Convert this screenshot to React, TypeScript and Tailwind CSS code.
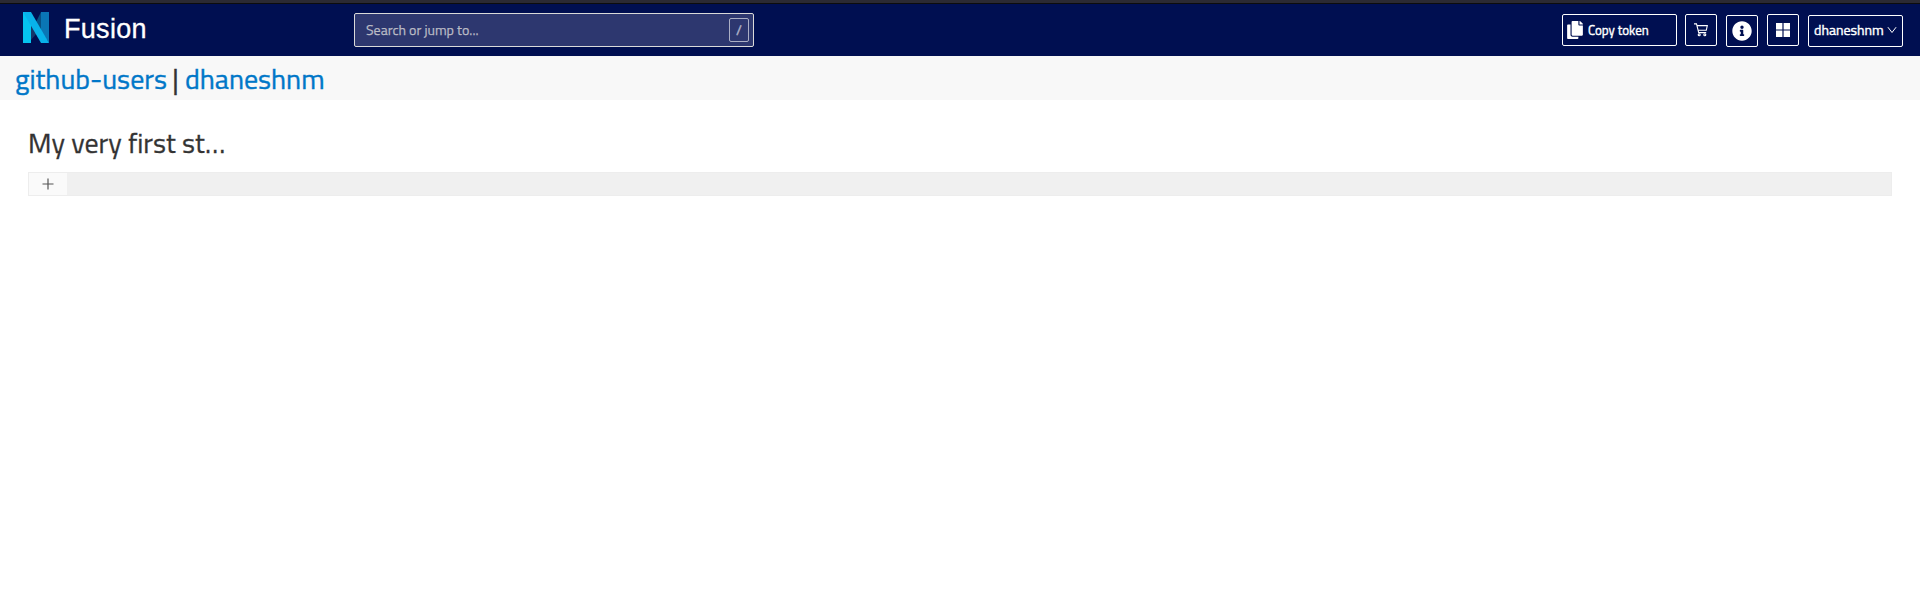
import React from "react";
import { FaCopy, FaInfoCircle } from "react-icons/fa";

function Logo() {
  return (
    <svg width="26" height="31" viewBox="0 0 26 31" className="shrink-0">
      <path d="M18 0H26V31L18 20Z" fill="#0a76b5" />
      <path d="M18 0V20L13 10Z" fill="#075083" />
      <path d="M8 12L14 21L8 28Z" fill="#14366a" />
      <path d="M0 0H8V31H0Z" fill="#05c4f0" />
      <path d="M0 0H8L26 31H18Z" fill="#08b2ea" />
    </svg>
  );
}

function NavButton({ className = "", children }: { className?: string; children: React.ReactNode }) {
  return (
    <button className={`flex h-8 shrink-0 items-center rounded-[2px] border border-white text-white ${className}`}>
      {children}
    </button>
  );
}

export default function App() {
  return (
    <div className="h-[592px] overflow-hidden bg-white font-['Titillium_Web','Roboto',sans-serif] text-[#333]">
      <div className="h-[3px] bg-[#2b2a33]" />
      <header className="flex h-[53px] items-start border-t border-[#0c0c0d] bg-[#000f51]">
        <div className="flex w-[354px] items-start pl-[23px] pt-2">
          <Logo />
          <span className="ml-[15px] mt-[2px] font-['Liberation_Sans',sans-serif] text-[27px] leading-[31px] tracking-[0.3px] text-white [-webkit-text-stroke:0.3px_white]">
            Fusion
          </span>
        </div>
        <div className="mt-[9px] flex h-[34px] w-[400px] items-center justify-between rounded-[2px] border border-[#d9d9d9] bg-[#2d376f] pl-[11px] pr-[4px]">
          <span className="pb-[2px] text-[14px] text-[#b9bac4] [-webkit-text-stroke:0.25px_#b9bac4]">Search or jump to...</span>
          <span className="flex h-6 w-5 items-center justify-center rounded-[2px] border border-[#abafc5] pb-[2px] text-[14px] text-[#abafc5] [-webkit-text-stroke:0.4px_#abafc5]">
            /
          </span>
        </div>
        <div className="ml-auto flex items-start pr-[17px] pt-[10px]">
          <NavButton className="w-[115px] pl-[4px]">
            <FaCopy size={18} className="w-4" />
            <span className="ml-[5px] whitespace-nowrap pt-px text-[13px] [-webkit-text-stroke:0.4px_white]">Copy token</span>
          </NavButton>
          <NavButton className="ml-2 w-8 justify-center border-[#d9d9d9]">
            <svg width="14" height="14" viewBox="0 0 14 14" fill="none" stroke="currentColor" strokeWidth="1.1">
              <path d="M0 .9H2.5L4.7 9.6H12.2M3.2 2.6H13.3L12.3 7.3H4.2" />
              <circle cx="5.2" cy="11.8" r="1" />
              <circle cx="10.8" cy="11.8" r="1" />
            </svg>
          </NavButton>
          <NavButton className="ml-[9px] mt-px w-8 justify-center">
            <FaInfoCircle size={20} />
          </NavButton>
          <NavButton className="ml-[9px] w-8 justify-center border-[#d9d9d9]">
            <svg width="14" height="14" viewBox="0 0 14 14" fill="currentColor">
              <path d="M0 0h6.4v6.4H0zM7.6 0H14v6.4H7.6zM0 7.6h6.4V14H0zM7.6 7.6H14V14H7.6z" />
            </svg>
          </NavButton>
          <NavButton className="ml-[9px] mt-px w-[95px] pl-[5px]">
            <span className="w-[71px] pb-[3px] text-left text-[14px] [-webkit-text-stroke:0.4px_white]">dhaneshnm</span>
            <svg width="10" height="8" viewBox="0 0 10 8" fill="none" stroke="currentColor" className="mb-[2px] ml-[2px] shrink-0">
              <path d="M.9 1.2L5 6.5L9.1 1.2" />
            </svg>
          </NavButton>
        </div>
      </header>
      <h1 className="flex h-11 items-center whitespace-pre bg-[#f8f8f8] pl-[15px] pt-[2px] text-[28px] leading-none [-webkit-text-stroke:0.4px]">
        <a className="w-[150px] text-[#0077c8]">github-users</a>
        <span className="w-5 pl-px text-center">|</span>
        <a className="text-[#0077c8]">dhaneshnm</a>
      </h1>
      <main className="px-7 pt-[23px]">
        <h2 className="h-[41px] text-[28px] leading-10 [-webkit-text-stroke:0.3px]">My very first st…</h2>
        <div className="mt-2 flex h-6 border border-[#ededed] bg-[#f0f0f0]">
          <button className="flex w-[39px] items-center justify-center border-r border-[#f0f0f0] bg-[#fafafa] text-[#555]">
            <svg width="12" height="12" viewBox="0 0 12 12" fill="none" stroke="currentColor" strokeWidth="1.2">
              <path d="M6 .5V11.5M.5 6H11.5" />
            </svg>
          </button>
        </div>
      </main>
    </div>
  );
}
